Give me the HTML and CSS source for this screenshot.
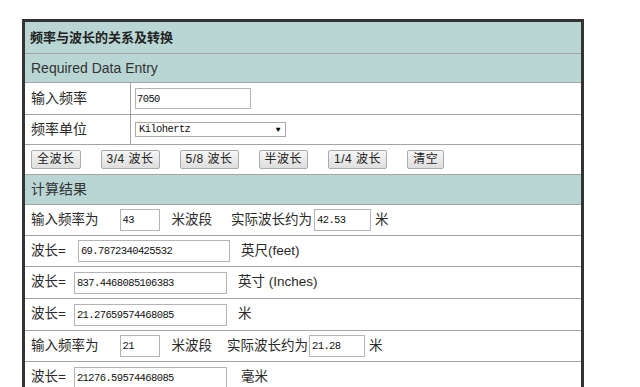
FILE: index.html
```html
<!DOCTYPE html>
<html lang="zh-CN">
<head>
<meta charset="utf-8">
<title>频率与波长的关系及转换</title>
<link rel="stylesheet" href="styles.css">
</head>
<body>
<div class="panel">
  <div class="row head r1"><span class="title">频率与波长的关系及转换</span></div>
  <div class="row head r2"><span class="sub">Required Data Entry</span></div>
  <div class="row split r3">
    <div class="lab">输入频率</div>
    <div class="val"><input class="field f-freq" value="7050"></div>
  </div>
  <div class="row split r4">
    <div class="lab">频率单位</div>
    <div class="val"><div class="sel">Kilohertz</div></div>
  </div>
  <div class="row btns r5">
    <button class="btn">全波长</button>
    <button class="btn">3/4 波长</button>
    <button class="btn">5/8 波长</button>
    <button class="btn">半波长</button>
    <button class="btn">1/4 波长</button>
    <button class="btn">清空</button>
  </div>
  <div class="row head r6"><span class="sub">计算结果</span></div>
  <div class="row res r7">
    <span class="t">输入频率为</span>
    <input class="field band" value="43">
    <span class="t t2">米波段</span>
    <span class="t t3">实际波长约为</span>
    <input class="field approx" value="42.53">
    <span class="t t4">米</span>
  </div>
  <div class="row res r8">
    <span class="t">波长=</span>
    <input class="field wl wl-a" value="69.7872340425532">
    <span class="t unit">英尺(feet)</span>
  </div>
  <div class="row res r9">
    <span class="t">波长=</span>
    <input class="field wl" value="837.4468085106383">
    <span class="t unit">英寸 (Inches)</span>
  </div>
  <div class="row res r10">
    <span class="t">波长=</span>
    <input class="field wl" value="21.27659574468085">
    <span class="t unit">米</span>
  </div>
  <div class="row res r11">
    <span class="t">输入频率为</span>
    <input class="field band" value="21">
    <span class="t t2">米波段</span>
    <span class="t t3 t3-b">实际波长约为</span>
    <input class="field approx approx-b" value="21.28">
    <span class="t t4">米</span>
  </div>
  <div class="row res r12">
    <span class="t">波长=</span>
    <input class="field wl" value="21276.59574468085">
    <span class="t unit unit-b">毫米</span>
  </div>
</div>
</body>
</html>
```

FILE: styles.css
```css
html, body {
  margin: 0;
  padding: 0;
  background: #ffffff;
}

body {
  font-family: "Liberation Sans", "Noto Sans CJK SC", sans-serif;
  color: #2a2a2a;
  font-size: 13.5px;
  line-height: 1.2;
}

.panel {
  margin: 19px 0 0 22px;
  width: 556px;
  border: 3px solid #333333;
  border-bottom: none;
  background: #ffffff;
}

.row {
  display: flex;
  align-items: center;
  border-bottom: 1px solid #a4a4a4;
  box-sizing: content-box;
  padding-left: 6px;
}

.head {
  background: #b9d6d5;
}

.title {
  font-weight: bold;
  font-size: 13px;
  color: #222222;
  margin-left: -1px;
}

.sub {
  font-size: 14px;
  color: #333333;
}

.r1 { height: 31px; }
.r2 { height: 28px; }
.r3 { height: 31px; }
.r4 { height: 29px; }
.r5 { height: 29px; }
.r6 { height: 29px; }
.r7 { height: 30px; }
.r8 { height: 30px; }
.r9 { height: 31px; }
.r10 { height: 31px; }
.r11 { height: 30px; }
.r12 { height: 31px; }

.split {
  align-items: stretch;
  padding-left: 0;
}

.lab {
  width: 99px;
  padding-left: 6px;
  border-right: 1px solid #a4a4a4;
  display: flex;
  align-items: center;
  font-size: 14px;
}

.val {
  display: flex;
  align-items: center;
  padding-left: 4px;
}

.field {
  box-sizing: border-box;
  height: 22px;
  margin: 0;
  padding: 0 2px;
  border: 1px solid #b4b4b4;
  background: #ffffff;
  font-family: "Liberation Mono", monospace;
  font-size: 10.5px;
  letter-spacing: -0.6px;
  color: #111111;
  outline: none;
}

.f-freq {
  width: 116px;
  height: 21px;
  padding-left: 1px;
}

.sel {
  position: relative;
  box-sizing: border-box;
  width: 151px;
  height: 15px;
  border: 1px solid #a9a9a9;
  padding-left: 3px;
  font-family: "Liberation Mono", monospace;
  font-size: 10.5px;
  letter-spacing: -0.6px;
  line-height: 13px;
  color: #111111;
  background: #ffffff;
}

.sel::after {
  content: "▼";
  position: absolute;
  right: 5px;
  top: 0;
  font-size: 8px;
  line-height: 13px;
  color: #000000;
}

.btns {
  gap: 20px;
}

.btn {
  box-sizing: border-box;
  height: 19px;
  margin: 0;
  padding: 0 5px;
  border: 1px solid #ababab;
  border-radius: 2px;
  background: linear-gradient(#f6f6f6, #dedede);
  font-family: "Liberation Sans", "Noto Sans CJK SC", sans-serif;
  font-size: 12px;
  line-height: 17px;
  letter-spacing: 0.5px;
  color: #222222;
}

.t {
  white-space: nowrap;
}

.band {
  width: 40px;
  margin-left: 21px;
}

.t2 { margin-left: 12px; }
.t3 { margin-left: 19px; }
.t3-b { margin-left: 15px; }

.approx {
  width: 57px;
  margin-left: 2px;
}

.approx-b {
  width: 56px;
  margin-left: 1px;
}

.t4 { margin-left: 4px; }

.wl {
  width: 153px;
  margin-left: 8px;
}

.wl-a {
  width: 152px;
  margin-left: 12px;
}

.unit { margin-left: 11px; }
.unit-b { margin-left: 14px; }
```
